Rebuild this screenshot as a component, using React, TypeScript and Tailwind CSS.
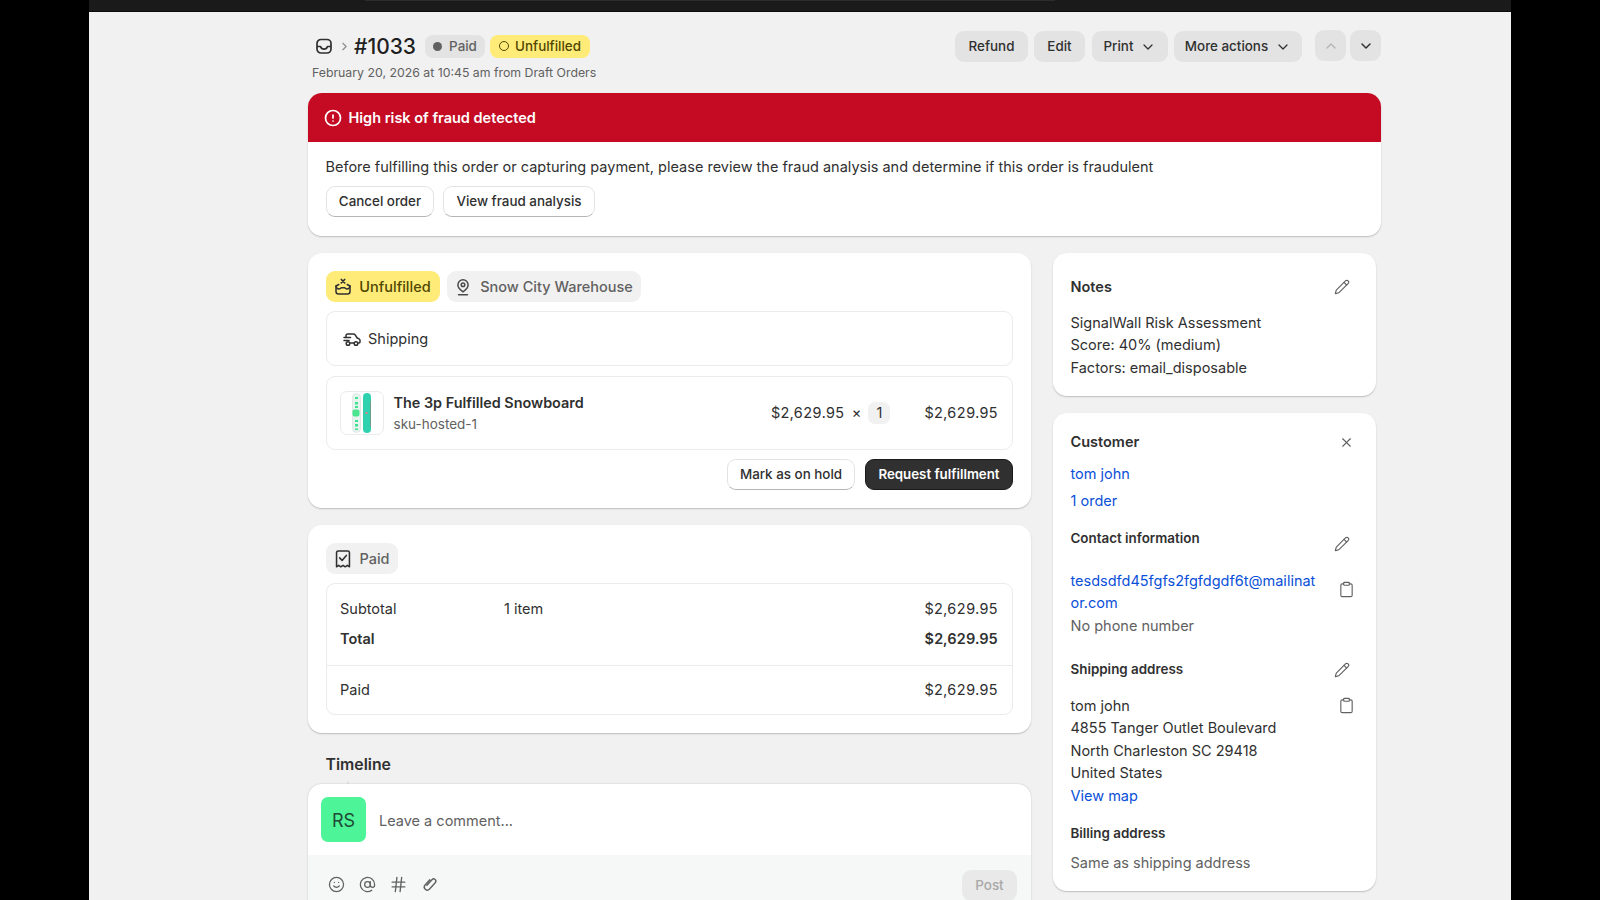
import { AlertCircle, AtSign, ChevronDown, ChevronRight, ChevronUp, Clipboard, Hash, Pencil, Smile, X } from "lucide-react";

function InboxIcon() {
  return (
    <svg width="18" height="18" viewBox="0 0 18 18" fill="none" stroke="#303030" strokeWidth="1.7" aria-hidden={true}>
      <rect x="2" y="2.5" width="14" height="13.5" rx="4" />
      <path d="M2 9.5h3.5c.6 1.8 2 2.6 3.5 2.6s2.9-.8 3.5-2.6H16" strokeLinejoin="round" />
    </svg>
  );
}

function HoldIcon() {
  return (
    <svg width="18" height="18" viewBox="0 0 18 18" fill="none" stroke="#303030" strokeWidth="1.5" strokeLinecap="round" strokeLinejoin="round" aria-hidden={true}>
      <path d="M2 8v5.500A2.500 2.500 0 0 0 4.500 16h9a2.500 2.500 0 0 0 2.500-2.500V8l-2.800-1.500" />
      <path d="M4.800 6.500 2 8c.3 2 1.500 3 3 3 1.200 0 1.800-.6 2.300-1.200h3.400c.5.600 1.100 1.200 2.300 1.200 1.500 0 2.700-1 3-3" />
      <path d="m7.300 1.500 3.400 3.400M10.700 1.500 7.300 4.900" strokeWidth="1.700" />
    </svg>
  );
}

function PinIcon() {
  return (
    <svg width="18" height="18" viewBox="0 0 18 18" fill="none" stroke="#4a4a4a" strokeWidth="1.500" strokeLinecap="round" strokeLinejoin="round" aria-hidden={true}>
      <path d="M9 13.800C6.200 11.800 3.900 9.700 3.900 6.900a5.100 5.100 0 0 1 10.200 0c0 2.800-2.300 4.900-5.100 6.900Z" />
      <circle cx="9" cy="6.800" r="1.800" />
      <path d="M4.500 16.700h9" />
    </svg>
  );
}

function TruckIcon() {
  return (
    <svg width="18" height="18" viewBox="0 0 18 18" fill="none" stroke="#303030" strokeWidth="1.500" strokeLinecap="round" strokeLinejoin="round" aria-hidden={true}>
      <path d="M3 7V5.500A1.500 1.500 0 0 1 4.500 4h6.200c.5 0 1 .3 1.300.7L14.200 8l1.800.8c.6.300 1 .9 1 1.500v1.700c0 .6-.4 1-1 1h-.5M7.500 13h3.800" />
      <path d="M1 7.500h6.500M1 10.500h5" />
      <circle cx="5" cy="13.500" r="1.800" />
      <circle cx="13" cy="13.500" r="1.800" />
    </svg>
  );
}

function ReceiptCheckIcon() {
  return (
    <svg width="20" height="20" viewBox="0 0 18 18" fill="none" stroke="#303030" strokeWidth="1.400" strokeLinecap="round" strokeLinejoin="round" aria-hidden={true}>
      <path d="M3.200 3.200A1.500 1.500 0 0 1 4.700 1.800h8.600a1.500 1.500 0 0 1 1.500 1.400V16l-1.900-1.300-1.900 1.300L9 14.700 7 16l-1.900-1.300L3.200 16V3.200Z" />
      <path d="m6 8 2.200 2.300L12 5.800" />
    </svg>
  );
}

function ClipIcon() {
  return (
    <svg width="18" height="18" viewBox="0 0 18 18" fill="none" stroke="#616161" strokeWidth="1.400" strokeLinecap="round" aria-hidden={true}>
      <path transform="rotate(42 9 9)" d="M6 6v7a3 3 0 0 0 6 0V4.500a2.200 2.200 0 0 0-4.400 0V12" />
    </svg>
  );
}

function SnowboardThumb() {
  return (
    <svg width="30" height="40" viewBox="0 0 30 40" aria-hidden={true}>
      <g transform="translate(2 0)">
        <rect x="3.500" y="0.500" width="8" height="39" rx="4" fill="#e7f3ef" stroke="#cfd8d6" strokeWidth="0.500" />
        <rect x="6" y="4" width="3" height="2" fill="#3fe08f" />
        <rect x="6" y="9" width="3" height="2.500" fill="#3fe08f" />
        <rect x="6" y="13" width="3" height="2" fill="#3fe08f" />
        <rect x="3.500" y="16.500" width="7" height="7" rx="2" fill="#4be58f" />
        <rect x="6" y="27" width="3" height="2" fill="#3fe08f" />
        <rect x="6" y="31" width="3" height="2.500" fill="#3fe08f" />
        <rect x="6" y="35.500" width="3" height="1.500" fill="#3fe08f" />
      </g>
      <g transform="translate(1.500 0)">
        <rect x="14.500" y="0" width="8" height="40" rx="4" fill="#30d1ae" />
        <rect x="21.500" y="8" width="1" height="26" fill="#6f9d8c" />
        <rect x="17" y="19" width="2" height="2" fill="#e97a8c" />
      </g>
    </svg>
  );
}

function ActionButton({ label, chevron, className }: { label: string; chevron?: boolean; className: string }) {
  return (
    <button className={`flex h-[31px] items-center justify-center gap-[7px] rounded-[9px] bg-[#e3e3e3] text-[13.400px] font-medium text-[#303030] ${className}`}>
      {label}
      {chevron && <ChevronDown size={16} strokeWidth={1.900} />}
    </button>
  );
}

function WhiteButton({ label, className }: { label: string; className: string }) {
  return (
    <button className={`flex h-[31px] items-center justify-center rounded-[9px] border border-[#e3e3e3] border-b-[#b5b5b5] bg-white text-[13.400px] font-medium text-[#303030] ${className}`}>
      {label}
    </button>
  );
}

function Card({ className, children }: { className: string; children: React.ReactNode }) {
  return <section className={`rounded-[14px] bg-white shadow-[0_1px_0_0_rgba(26,26,26,0.07),0_1px_2px_rgba(0,0,0,0.16)] ${className}`}>{children}</section>;
}

function Row({ label, middle, amount, bold }: { label: string; middle?: string; amount: string; bold?: boolean }) {
  return (
    <div className={`flex h-[30px] items-center text-[#303030] ${bold ? "font-semibold" : ""}`}>
      <span className="w-[164px]">{label}</span>
      <span className="flex-1">{middle}</span>
      <span className="tabular-nums">{amount}</span>
    </div>
  );
}

export default function App() {
  return (
    <div className="flex h-[900px] overflow-hidden bg-black pl-[89px] font-[Inter,sans-serif] text-[14.500px] text-[#303030]">
      <div className="flex w-[1422px] flex-col bg-[#f1f1f1]">
        <div className="h-[12px] shrink-0 border-b border-[#0a0a0a] bg-[#1a1a1a]">
          <div className="ml-[276px] h-[1px] w-[690px] bg-[#2c2c2c]" />
        </div>
        <main className="flex w-[1292px] flex-col pl-[219px]">
          <header className="flex h-[81px] items-start justify-between">
            <div className="pl-[4px] pt-[22px]">
              <div className="flex h-[24px] items-center">
                <span className="ml-[3px]"><InboxIcon /></span>
                <ChevronRight size={13} className="ml-[5px] text-[#8a8a8a]" />
                <h1 className="ml-[3px] text-[21px] font-medium leading-none text-[#1f1f1f]">#1033</h1>
                <span className="ml-[9px] flex h-[23px] w-[60px] items-center justify-center gap-[7px] rounded-[8px] bg-[#e3e3e3] text-[13.400px] font-medium text-[#616161]">
                  <span className="h-[9px] w-[9px] rounded-full bg-[#616161]" />
                  Paid
                </span>
                <span className="ml-[5px] flex h-[23px] w-[100px] items-center justify-center gap-[6px] rounded-[8px] bg-[#ffeb78] text-[13.400px] font-medium text-[#4f4700]">
                  <span className="h-[10px] w-[10px] rounded-full border-[1.500px] border-[#4f4700]" />
                  Unfulfilled
                </span>
              </div>
              <p className="mt-[5px] text-[12.300px] leading-[20px] text-[#616161]">February 20, 2026 at 10:45 am from Draft Orders</p>
            </div>
            <div className="flex items-start pt-[18px]">
              <div className="flex gap-[6px] pt-[1px]">
                <ActionButton label="Refund" className="w-[73px]" />
                <ActionButton label="Edit" className="mr-[1px] w-[51px]" />
                <ActionButton label="Print" chevron className="w-[76px]" />
                <ActionButton label="More actions" chevron className="w-[128px]" />
              </div>
              <div className="ml-[13px] flex gap-[4px]">
                <button className="flex h-[31px] w-[31px] items-center justify-center rounded-[9px] bg-[#e3e3e3] text-[#b5b5b5]"><ChevronUp size={16} /></button>
                <button className="flex h-[31px] w-[31px] items-center justify-center rounded-[9px] bg-[#e3e3e3] text-[#303030]"><ChevronDown size={16} strokeWidth={2.200} /></button>
              </div>
            </div>
          </header>

          <Card className="h-[143px] overflow-hidden">
            <div className="flex h-[49px] items-center gap-[7px] bg-[#c40b23] pl-[15.500px] font-semibold text-white">
              <AlertCircle size={18} strokeWidth={2.300} />
              High risk of fraud detected
            </div>
            <p className="pl-[17.500px] pt-[14px] leading-[22px] text-[#303030]">Before fulfilling this order or capturing payment, please review the fraud analysis and determine if this order is fraudulent</p>
            <div className="flex gap-[9px] pl-[18px] pt-[8px]">
              <WhiteButton label="Cancel order" className="w-[108px]" />
              <WhiteButton label="View fraud analysis" className="w-[152px]" />
            </div>
          </Card>

          <div className="mt-[17px] flex items-start">
            <div className="flex w-[723px] flex-col">
              <Card className="h-[255px] pl-[17.500px] pr-[18px] pt-[18px]">
                <div className="flex gap-[7px]">
                  <span className="flex h-[31px] w-[114px] items-center justify-center gap-[7px] rounded-[9px] bg-[#ffeb78] font-medium text-[#4f4700]"><HoldIcon /><span className="pt-[1px]">Unfulfilled</span></span>
                  <span className="flex h-[31px] w-[194px] items-center justify-center gap-[8px] rounded-[9px] bg-[#f1f1f1] font-medium text-[#616161]"><PinIcon /><span className="pt-[1px]">Snow City Warehouse</span></span>
                </div>
                <div className="mt-[9px] flex h-[55px] items-center gap-[7px] rounded-[9px] border border-[#ebebeb] pl-[16.500px]"><TruckIcon /><span className="pt-[1px]">Shipping</span></div>
                <div className="mt-[10px] flex h-[74px] items-center rounded-[9px] border border-[#ebebeb] pl-[13.500px] pr-[14px]">
                  <span className="flex h-[44px] w-[44px] items-center justify-center rounded-[7px] border border-[#ebebeb]"><SnowboardThumb /></span>
                  <div className="ml-[9.500px] flex-1">
                    <p className="text-[14.400px] font-semibold leading-[22px] text-[#303030]">The 3p Fulfilled Snowboard</p>
                    <p className="text-[13.500px] leading-[20px] text-[#616161]">sku-hosted-1</p>
                  </div>
                  <span className="tabular-nums">$2,629.95</span>
                  <span className="ml-[4px] w-[16px] text-center">×</span>
                  <span className="ml-[4px] flex h-[22px] w-[22px] items-center justify-center rounded-[7px] bg-[#f1f1f1]">1</span>
                  <span className="ml-[34px] tabular-nums">$2,629.95</span>
                </div>
                <div className="mt-[9px] flex justify-end gap-[10px]">
                  <WhiteButton label="Mark as on hold" className="w-[128px]" />
                  <button className="flex h-[31px] w-[148px] items-center justify-center rounded-[9px] border border-[#1a1a1a] bg-[#303030] text-[13.300px] font-semibold text-white">Request fulfillment</button>
                </div>
              </Card>

              <Card className="mt-[17px] h-[208px] pl-[17.500px] pr-[18px] pt-[18px]">
                <span className="flex h-[31px] w-[72px] items-center justify-center gap-[6px] rounded-[9px] bg-[#f1f1f1] font-medium text-[#616161]"><ReceiptCheckIcon /><span className="pt-[1px]">Paid</span></span>
                <div className="mt-[9px] h-[132px] rounded-[9px] border border-[#ebebeb] pl-[13.500px] pr-[14px]">
                  <div className="h-[81px] pt-[10px]">
                    <Row label="Subtotal" middle="1 item" amount="$2,629.95" />
                    <Row label="Total" amount="$2,629.95" bold />
                  </div>
                  <div className="-ml-[13.500px] -mr-[14px] flex h-[49px] items-center border-t border-[#ebebeb] pl-[13.500px] pr-[14px]">
                    <span className="flex-1">Paid</span>
                    <span className="tabular-nums">$2,629.95</span>
                  </div>
                </div>
              </Card>

              <h2 className="ml-[17.500px] mt-[22px] text-[15.800px] font-semibold leading-[20px] text-[#303030]">Timeline</h2>
              <div className="ml-[39px] mt-[6px] h-[3px] w-[2px] bg-[#e3e3e3]" />
              <section className="h-[129px] overflow-hidden rounded-t-[14px] bg-white shadow-[0_0_2px_rgba(0,0,0,0.2)]">
                <div className="flex h-[71px] items-center pl-[13px]">
                  <span className="flex h-[45px] w-[45px] items-center justify-center rounded-[7px] bg-[#4df598] pt-[2px] text-[18px] text-[#1f4a35]">RS</span>
                  <span className="ml-[13px] pt-[2px] text-[#616161]">Leave a comment...</span>
                </div>
                <div className="flex h-[58px] items-start bg-[#f6f8f8] pl-[20px] pr-[14px] text-[#616161]">
                  <div className="mt-[19px] flex h-[20px] items-center gap-[14px]">
                    <Smile size={17} strokeWidth={1.800} />
                    <AtSign size={17} strokeWidth={1.800} />
                    <Hash size={19} strokeWidth={1.700} className="-mx-[1px]" />
                    <ClipIcon />
                  </div>
                  <button className="ml-auto mt-[15px] h-[31px] w-[55px] rounded-[9px] bg-[#e9e9e9] text-[13.400px] font-medium text-[#a8a8a8]">Post</button>
                </div>
              </section>
            </div>

            <aside className="ml-[22px] flex w-[323px] flex-col gap-[17px]">
              <Card className="h-[143px] pl-[17.500px] pr-[18px] pt-[23px]">
                <div className="flex h-[22px] items-center justify-between pr-[8px]">
                  <h2 className="font-semibold">Notes</h2>
                  <Pencil size={16} strokeWidth={1.700} className="text-[#616161]" />
                </div>
                <div className="mt-[14px] leading-[22.400px]">
                  <p>SignalWall Risk Assessment</p>
                  <p>Score: 40% (medium)</p>
                  <p>Factors: email_disposable</p>
                </div>
              </Card>

              <Card className="h-[478px] pl-[17.500px] pr-[18px] pt-[18px]">
                <div className="flex h-[22px] items-center justify-between pr-[4px]">
                  <h2 className="font-semibold">Customer</h2>
                  <X size={15} strokeWidth={1.800} className="text-[#616161]" />
                </div>
                <p className="mt-[10px] leading-[22px] text-[#0b50d8]">tom john</p>
                <p className="mt-[5px] leading-[22px] text-[#0b50d8]">1 order</p>
                <div className="mt-[21px] flex h-[22px] items-center justify-between pr-[8px]">
                  <h3 className="-mt-[12px] text-[13.400px] font-semibold">Contact information</h3>
                  <Pencil size={16} strokeWidth={1.700} className="text-[#616161]" />
                </div>
                <div className="mt-[15px] flex justify-between pr-[3px]">
                  <p className="w-[250px] break-all leading-[22.400px] text-[#0b50d8]">tesdsdfd45fgfs2fgfdgdf6t@mailinator.com</p>
                  <Clipboard size={17} strokeWidth={1.600} className="mt-[11px] text-[#616161]" />
                </div>
                <p className="leading-[22px] text-[#616161]">No phone number</p>
                <div className="mt-[22px] flex h-[22px] items-center justify-between pr-[8px]">
                  <h3 className="-mt-[1px] text-[13.400px] font-semibold">Shipping address</h3>
                  <Pencil size={16} strokeWidth={1.700} className="text-[#616161]" />
                </div>
                <div className="mt-[14px] flex justify-between pr-[3px]">
                  <div className="leading-[22.400px]">
                    <p>tom john</p>
                    <p>4855 Tanger Outlet Boulevard</p>
                    <p>North Charleston SC 29418</p>
                    <p>United States</p>
                    <p className="mt-[1px] text-[#0b50d8]">View map</p>
                  </div>
                  <Clipboard size={17} strokeWidth={1.600} className="mt-[2px] text-[#616161]" />
                </div>
                <h3 className="mt-[15px] text-[13.400px] font-semibold leading-[20px]">Billing address</h3>
                <p className="mt-[9px] leading-[22px] text-[#616161]">Same as shipping address</p>
              </Card>
            </aside>
          </div>
        </main>
      </div>
    </div>
  );
}
